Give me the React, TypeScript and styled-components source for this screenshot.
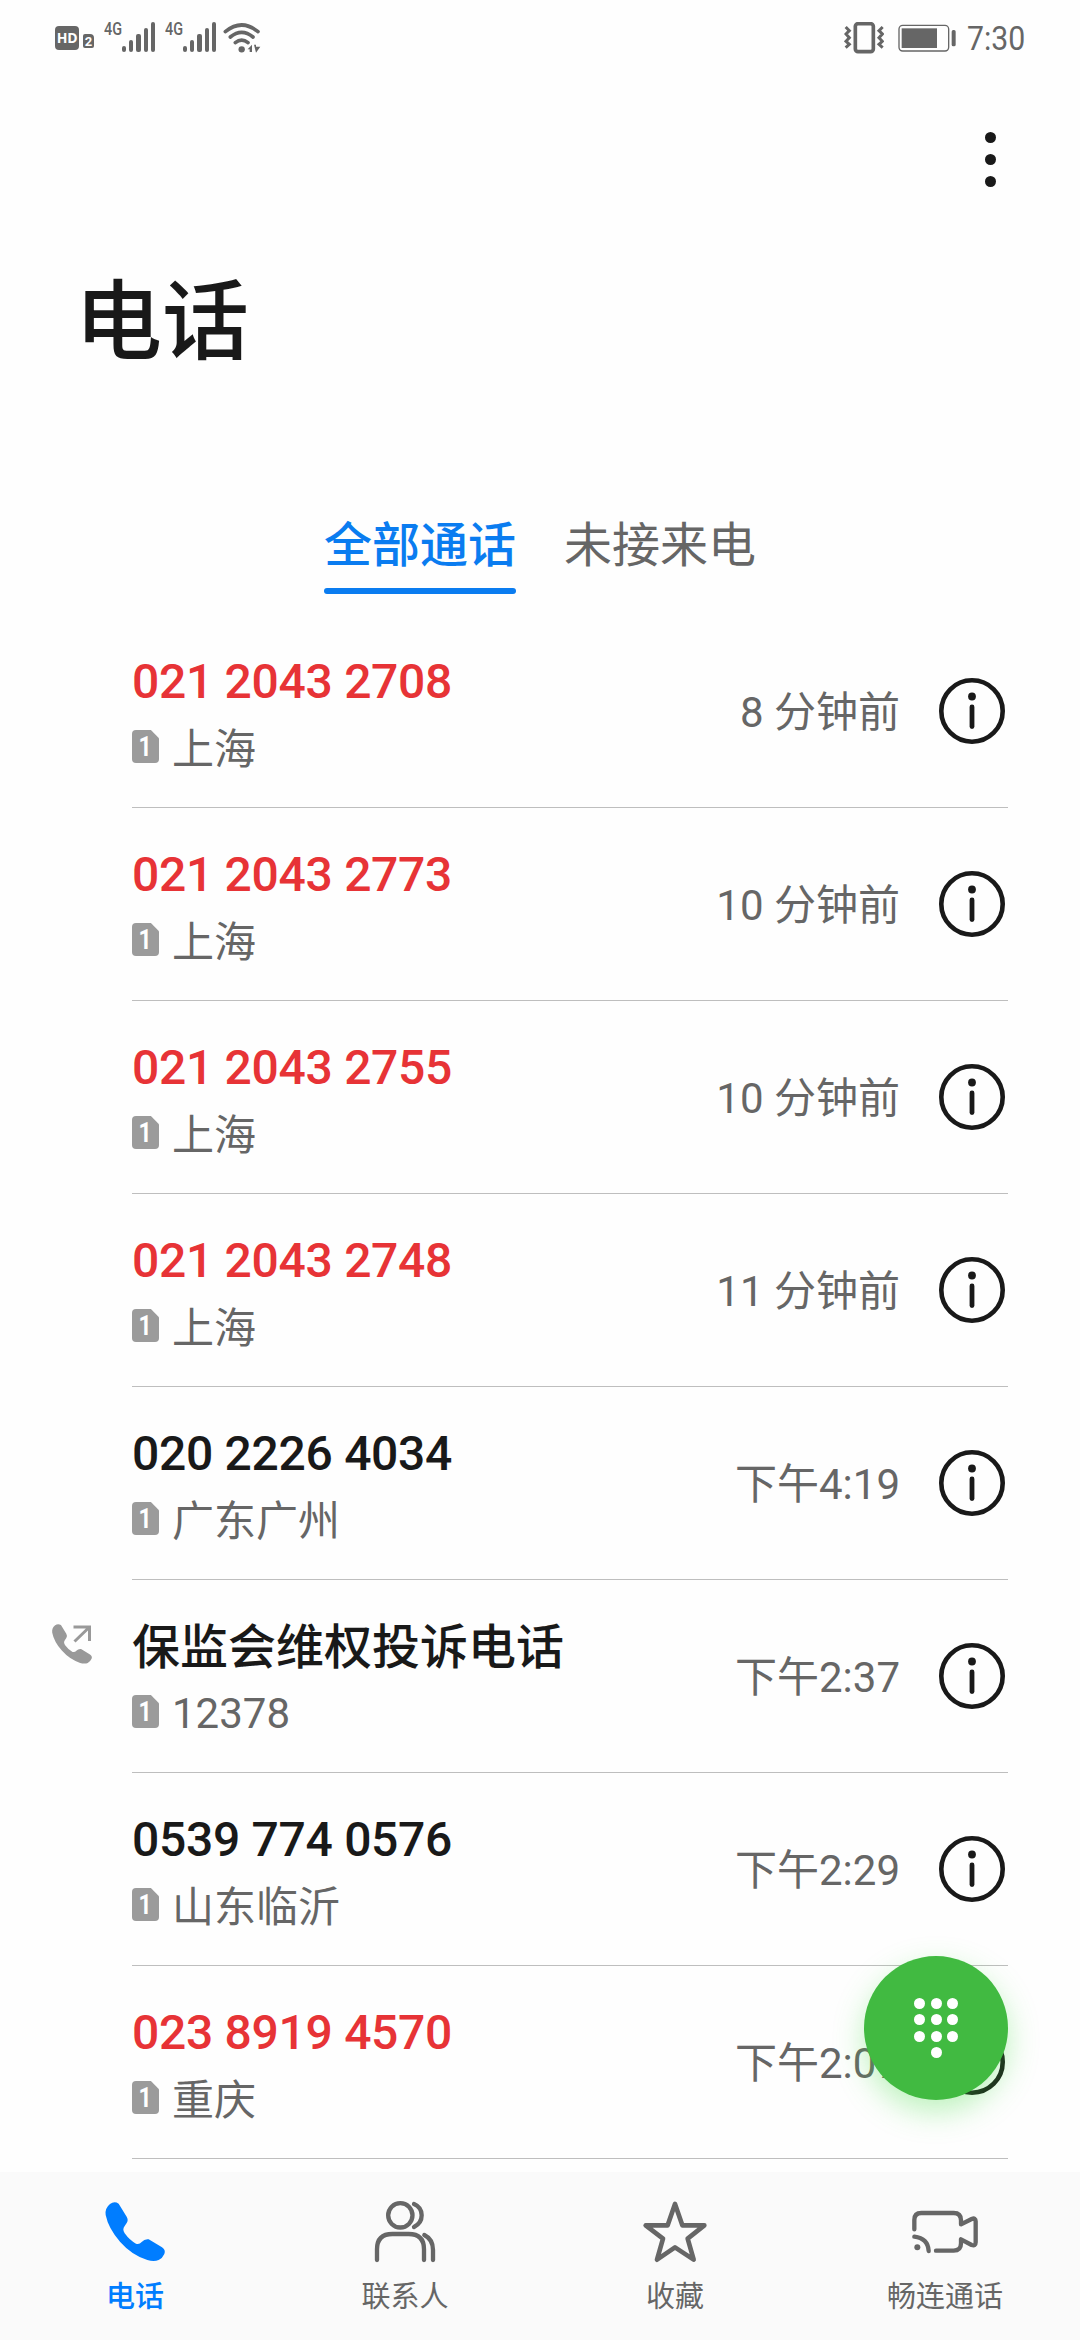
import React from "react";
import styled, { createGlobalStyle } from "styled-components";

const INK = "#191919";
const GREY = "#666666";
const BLUE = "#0a7cf0";

const GlobalStyle = createGlobalStyle`
  * { box-sizing: border-box; }
  html, body { margin: 0; padding: 0; background: #fefefe; }
  body {
    font-family: Roboto, "Noto Sans CJK SC", sans-serif;
    color: ${INK};
    overflow: hidden;
  }
  svg { display: block; flex: none; }
`;

const Screen = styled.div`
  position: relative;
  width: 1080px;
  height: 2340px;
  display: flex;
  flex-direction: column;
  overflow: hidden;
`;

const StatusBar = styled.div`
  height: 76px;
  flex: none;
  padding: 22px 57px 0 55px;
  display: flex;
  justify-content: space-between;
  align-items: flex-start;
`;

const StatusGroup = styled.div<{ $gap?: number }>`
  display: flex;
  align-items: flex-start;
  gap: ${(p) => p.$gap ?? 0}px;
`;

const HdBadge = styled.span`
  width: 24px;
  height: 24px;
  margin-top: 4px;
  border-radius: 4px;
  background: ${GREY};
  color: #fff;
  font: 700 14px/24px "Open Sans", sans-serif;
  letter-spacing: -0.4px;
  text-align: center;
`;

const SlotBadge = styled.span`
  width: 11px;
  height: 14px;
  margin: 12px 10px 0 4px;
  border-radius: 2px 4px 2px 2px;
  background: ${GREY};
  color: #fff;
  font: 700 13px/15px Roboto, sans-serif;
  text-align: center;
`;

const Network = styled.div`
  display: flex;
  align-items: flex-start;
  width: 61px;
`;

const NetworkLabel = styled.span`
  width: 18px;
  font: 500 19px/14px Roboto, sans-serif;
  color: ${GREY};
  transform: scaleX(0.76);
  transform-origin: 0 0;
`;

const Bars = styled.div`
  height: 30px;
  display: flex;
  align-items: flex-end;
  gap: 3px;
  width: 33px;
`;

const Bar = styled.span<{ $h: number }>`
  width: 4.2px;
  flex: none;
  height: ${(p) => p.$h}px;
  border-radius: 2px;
  background: ${GREY};
`;

const Clock = styled.span`
  width: 56px;
  margin-left: -3px;
  font: 400 34px/32px Roboto, sans-serif;
  color: ${GREY};
  white-space: nowrap;
  transform: scaleX(0.89);
  transform-origin: 0 0;
`;

const Toolbar = styled.div`
  height: 166px;
  flex: none;
  display: flex;
  align-items: center;
  justify-content: flex-end;
  padding-right: 84px;
`;

const MoreButton = styled.button`
  display: flex;
  flex-direction: column;
  gap: 11px;
  padding: 0;
  border: 0;
  background: none;
`;

const Dot = styled.span`
  width: 11px;
  height: 11px;
  border-radius: 50%;
  background: ${INK};
`;

const Title = styled.h1`
  margin: 0;
  height: 258px;
  flex: none;
  padding: 26px 0 0 75px;
  font-size: 87px;
  line-height: 110px;
  font-weight: 500;
`;

const Tabs = styled.div`
  height: 115px;
  flex: none;
  display: flex;
  justify-content: center;
  gap: 48px;
`;

const Tab = styled.div<{ $active?: boolean }>`
  height: 94px;
  padding-top: 14px;
  font-size: 48px;
  line-height: 64px;
  font-weight: ${(p) => (p.$active ? 500 : 400)};
  color: ${(p) => (p.$active ? BLUE : GREY)};
  display: flex;
  flex-direction: column;
  justify-content: space-between;

  &::after {
    content: "";
    height: 6px;
    border-radius: 3px;
    background: ${(p) => (p.$active ? BLUE : "transparent")};
  }
`;

const List = styled.div`
  flex: 1;
  overflow: hidden;
`;

const Row = styled.div`
  height: 193px;
  display: flex;
`;

const Lead = styled.div`
  width: 132px;
  padding: 43px 0 0 51px;
`;

const RowBody = styled.div`
  width: 876px;
  border-bottom: 1px solid #bebebe;
  display: flex;
  align-items: center;
`;

const Caller = styled.div`
  flex: 1;
  align-self: stretch;
  padding-top: 35px;
`;

const Name = styled.div<{ $missed?: boolean; $numeric: boolean }>`
  height: 64px;
  padding-top: ${(p) => (p.$numeric ? 0 : 1)}px;
  font-size: 48px;
  line-height: 64px;
  font-weight: 500;
  letter-spacing: ${(p) => (p.$numeric ? "-0.3px" : "0")};
  white-space: nowrap;
  color: ${(p) => (p.$missed ? "#e73336" : INK)};
`;

const Place = styled.div<{ $numeric: boolean }>`
  display: flex;
  margin-top: 7px;
  height: 56px;
  gap: 13px;
  font-size: 42px;
  line-height: ${(p) => (p.$numeric ? 56 : 58)}px;
  color: ${GREY};
`;

const Sim = styled.span`
  width: 27px;
  height: 33px;
  margin-top: 9px;
  border-radius: 4px;
  background: #9b9b9b;
  clip-path: polygon(0 0, 70% 0, 100% 25%, 100% 100%, 0 100%);
  color: #fff;
  text-align: center;
`;

const SimDigit = styled.span`
  display: block;
  font: 700 28px/34px Roboto, sans-serif;
  transform: scaleX(0.82);
  transform-origin: 40% 0;
`;

const Time = styled.div`
  margin-right: 39px;
  padding-top: 3px;
  font-size: 42px;
  line-height: 56px;
  color: ${GREY};
  white-space: nowrap;
`;

const InfoIcon = styled.svg`
  width: 66px;
  height: 66px;
  margin-right: 3px;
`;

const Fab = styled.button`
  position: absolute;
  right: 72px;
  bottom: 240px;
  width: 144px;
  height: 144px;
  padding: 0 0 0 50px;
  border: 0;
  border-radius: 50%;
  background: #41ba41;
  box-shadow: 0 12px 30px rgba(65, 220, 65, 0.34);
  display: grid;
  grid-template-columns: repeat(3, 11px);
  grid-auto-rows: 11px;
  gap: 5.5px;
  align-content: center;
`;

const Key = styled.span<{ $last?: boolean }>`
  width: 11px;
  height: 11px;
  border-radius: 50%;
  background: #fff;
  grid-column: ${(p) => (p.$last ? 2 : "auto")};
`;

const BottomNav = styled.nav`
  height: 168px;
  flex: none;
  background: #fafafa;
  display: grid;
  grid-template-columns: repeat(4, 1fr);
`;

const NavItem = styled.div<{ $active?: boolean }>`
  display: flex;
  flex-direction: column;
  align-items: center;
  padding-top: 25px;
  color: ${(p) => (p.$active ? "#007dff" : GREY)};
`;

const NavLabel = styled.span<{ $active?: boolean }>`
  margin-top: 4px;
  font-size: 29px;
  line-height: 36px;
  font-weight: ${(p) => (p.$active ? 500 : 400)};
`;

const HANDSET =
  "M150 132Q163 122 176 131L200 170Q206 180 200 189L194 198Q186 208 194 220Q210 242 228 251Q238 254 245 246Q254 236 266 238L306 262Q318 270 313 282Q308 294 296 300Q282 306 262 300Q215 285 180 245Q145 205 137 165Q134 145 150 132Z";

const Signal = () => (
  <Network>
    <NetworkLabel>4G</NetworkLabel>
    <Bars>
      {[6, 12, 18, 24, 30].map((h) => (
        <Bar key={h} $h={h} />
      ))}
    </Bars>
  </Network>
);

const WifiIcon = styled.svg`
  margin-left: -3px;
`;

const Wifi = () => (
  <WifiIcon width="38" height="32" viewBox="552 34 114 96" fill="none" stroke={GREY} strokeWidth="11" strokeLinecap="round">
    <path d="M559 63Q608 23 657 63M574 79Q608 51 642 79M589 96Q608 81 627 96" />
    <circle cx="608" cy="116" r="9.500" fill={GREY} stroke="none" />
    <path d="M626 116L639 102V124H632V116ZM645 102H651V108H664L651 126Z" fill={GREY} stroke="none" />
  </WifiIcon>
);

const Vibrate = () => (
  <svg width="40" height="32" viewBox="70 34 120 96" fill="none" stroke={GREY} strokeWidth="9">
    <rect x="104" y="39" width="54" height="84" rx="8" strokeWidth="11" />
    <path d="M75 49L86 60L76 70L86 81L76 92L86 101L75 111M186 49L175 60L185 70L175 81L185 92L175 101L186 111" />
  </svg>
);

const Battery = () => (
  <svg width="58" height="32" viewBox="234 34 174 96" fill={GREY}>
    <rect x="237" y="44" width="149" height="77" rx="11" fill="none" stroke={GREY} strokeWidth="4" />
    <rect x="245" y="53" width="106" height="59" />
    <rect x="395" y="58" width="12" height="49" rx="5" />
  </svg>
);

const Outgoing = () => (
  <svg width="42" height="42" viewBox="0 0 42 42" fill="none">
    <path transform="translate(1 1) scale(.2235) translate(-136 -126)" fill="#999" d={HANDSET} />
    <path d="M22.500 4H38.500V18M38 4.500L23.500 18.500" stroke="#999" strokeWidth="3" />
  </svg>
);

const Info = () => (
  <InfoIcon viewBox="0 0 66 66" fill="none" stroke={INK}>
    <circle cx="33" cy="33" r="30.700" strokeWidth="4.600" />
    <circle cx="33" cy="18.500" r="3.900" fill={INK} stroke="none" />
    <path d="M33 29V48.500" strokeWidth="4.800" strokeLinecap="round" />
  </InfoIcon>
);

const PhoneIcon = () => (
  <svg width="78" height="78" viewBox="108 111 234 234" fill="currentColor">
    <path d={HANDSET} />
  </svg>
);

const PeopleIcon = () => (
  <svg width="78" height="78" viewBox="918 111 234 234" fill="none" stroke="currentColor" strokeWidth="13" strokeLinecap="round">
    <circle cx="1021" cy="166" r="36.500" />
    <path d="M1062 132Q1085 142 1085 166Q1085 190 1062 201M951 300V268Q951 222 997 222H1046Q1092 222 1092 268V300M1093 225Q1119 238 1119 270V300" />
  </svg>
);

const StarIcon = () => (
  <svg width="78" height="78" viewBox="108 111 234 234" fill="none" stroke="currentColor" strokeWidth="14" strokeLinejoin="round">
    <path d="M225 132L247 196H313L263 236L281 299L225 262L171 299L189 236L137 196H203Z" />
  </svg>
);

const VideoIcon = () => (
  <svg width="78" height="78" viewBox="918 111 234 234" fill="none" stroke="currentColor" strokeWidth="13" strokeLinecap="round" strokeLinejoin="round">
    <path d="M943 208V180Q943 159 964 159H1061Q1083 159 1083 181V193L1115 177Q1127 172 1127 184V247Q1127 259 1115 255L1083 238V250Q1083 272 1061 272H1008" />
    <path d="M943 230Q984 235 986 273" />
    <circle cx="952" cy="262" r="9" fill="currentColor" stroke="none" />
  </svg>
);

type Call = { name: string; place: string; time: string; missed?: boolean; outgoing?: boolean };

const CALLS: Call[] = [
  { name: "021 2043 2708", place: "上海", time: "8 分钟前", missed: true },
  { name: "021 2043 2773", place: "上海", time: "10 分钟前", missed: true },
  { name: "021 2043 2755", place: "上海", time: "10 分钟前", missed: true },
  { name: "021 2043 2748", place: "上海", time: "11 分钟前", missed: true },
  { name: "020 2226 4034", place: "广东广州", time: "下午4:19" },
  { name: "保监会维权投诉电话", place: "12378", time: "下午2:37", outgoing: true },
  { name: "0539 774 0576", place: "山东临沂", time: "下午2:29" },
  { name: "023 8919 4570", place: "重庆", time: "下午2:07", missed: true },
];

const NAV = [
  { label: "电话", Icon: PhoneIcon, active: true },
  { label: "联系人", Icon: PeopleIcon },
  { label: "收藏", Icon: StarIcon },
  { label: "畅连通话", Icon: VideoIcon },
];

const isNumeric = (text: string) => /^[\d ]+$/.test(text);

export default function App() {
  return (
    <Screen>
      <GlobalStyle />
      <StatusBar>
        <StatusGroup>
          <HdBadge>HD</HdBadge>
          <SlotBadge>2</SlotBadge>
          <Signal />
          <Signal />
          <Wifi />
        </StatusGroup>
        <StatusGroup $gap={14}>
          <Vibrate />
          <Battery />
          <Clock>7:30</Clock>
        </StatusGroup>
      </StatusBar>
      <Toolbar>
        <MoreButton aria-label="更多">
          <Dot />
          <Dot />
          <Dot />
        </MoreButton>
      </Toolbar>
      <Title>电话</Title>
      <Tabs>
        <Tab $active>全部通话</Tab>
        <Tab>未接来电</Tab>
      </Tabs>
      <List>
        {CALLS.map((call) => (
          <Row key={call.name}>
            <Lead>{call.outgoing && <Outgoing />}</Lead>
            <RowBody>
              <Caller>
                <Name $missed={call.missed} $numeric={isNumeric(call.name)}>
                  {call.name}
                </Name>
                <Place $numeric={isNumeric(call.place)}>
                  <Sim>
                    <SimDigit>1</SimDigit>
                  </Sim>
                  {call.place}
                </Place>
              </Caller>
              <Time>{call.time}</Time>
              <Info />
            </RowBody>
          </Row>
        ))}
      </List>
      <BottomNav>
        {NAV.map(({ label, Icon, active }) => (
          <NavItem key={label} $active={active}>
            <Icon />
            <NavLabel $active={active}>{label}</NavLabel>
          </NavItem>
        ))}
      </BottomNav>
      <Fab aria-label="拨号">
        {Array.from({ length: 10 }, (_, i) => (
          <Key key={i} $last={i === 9} />
        ))}
      </Fab>
    </Screen>
  );
}
